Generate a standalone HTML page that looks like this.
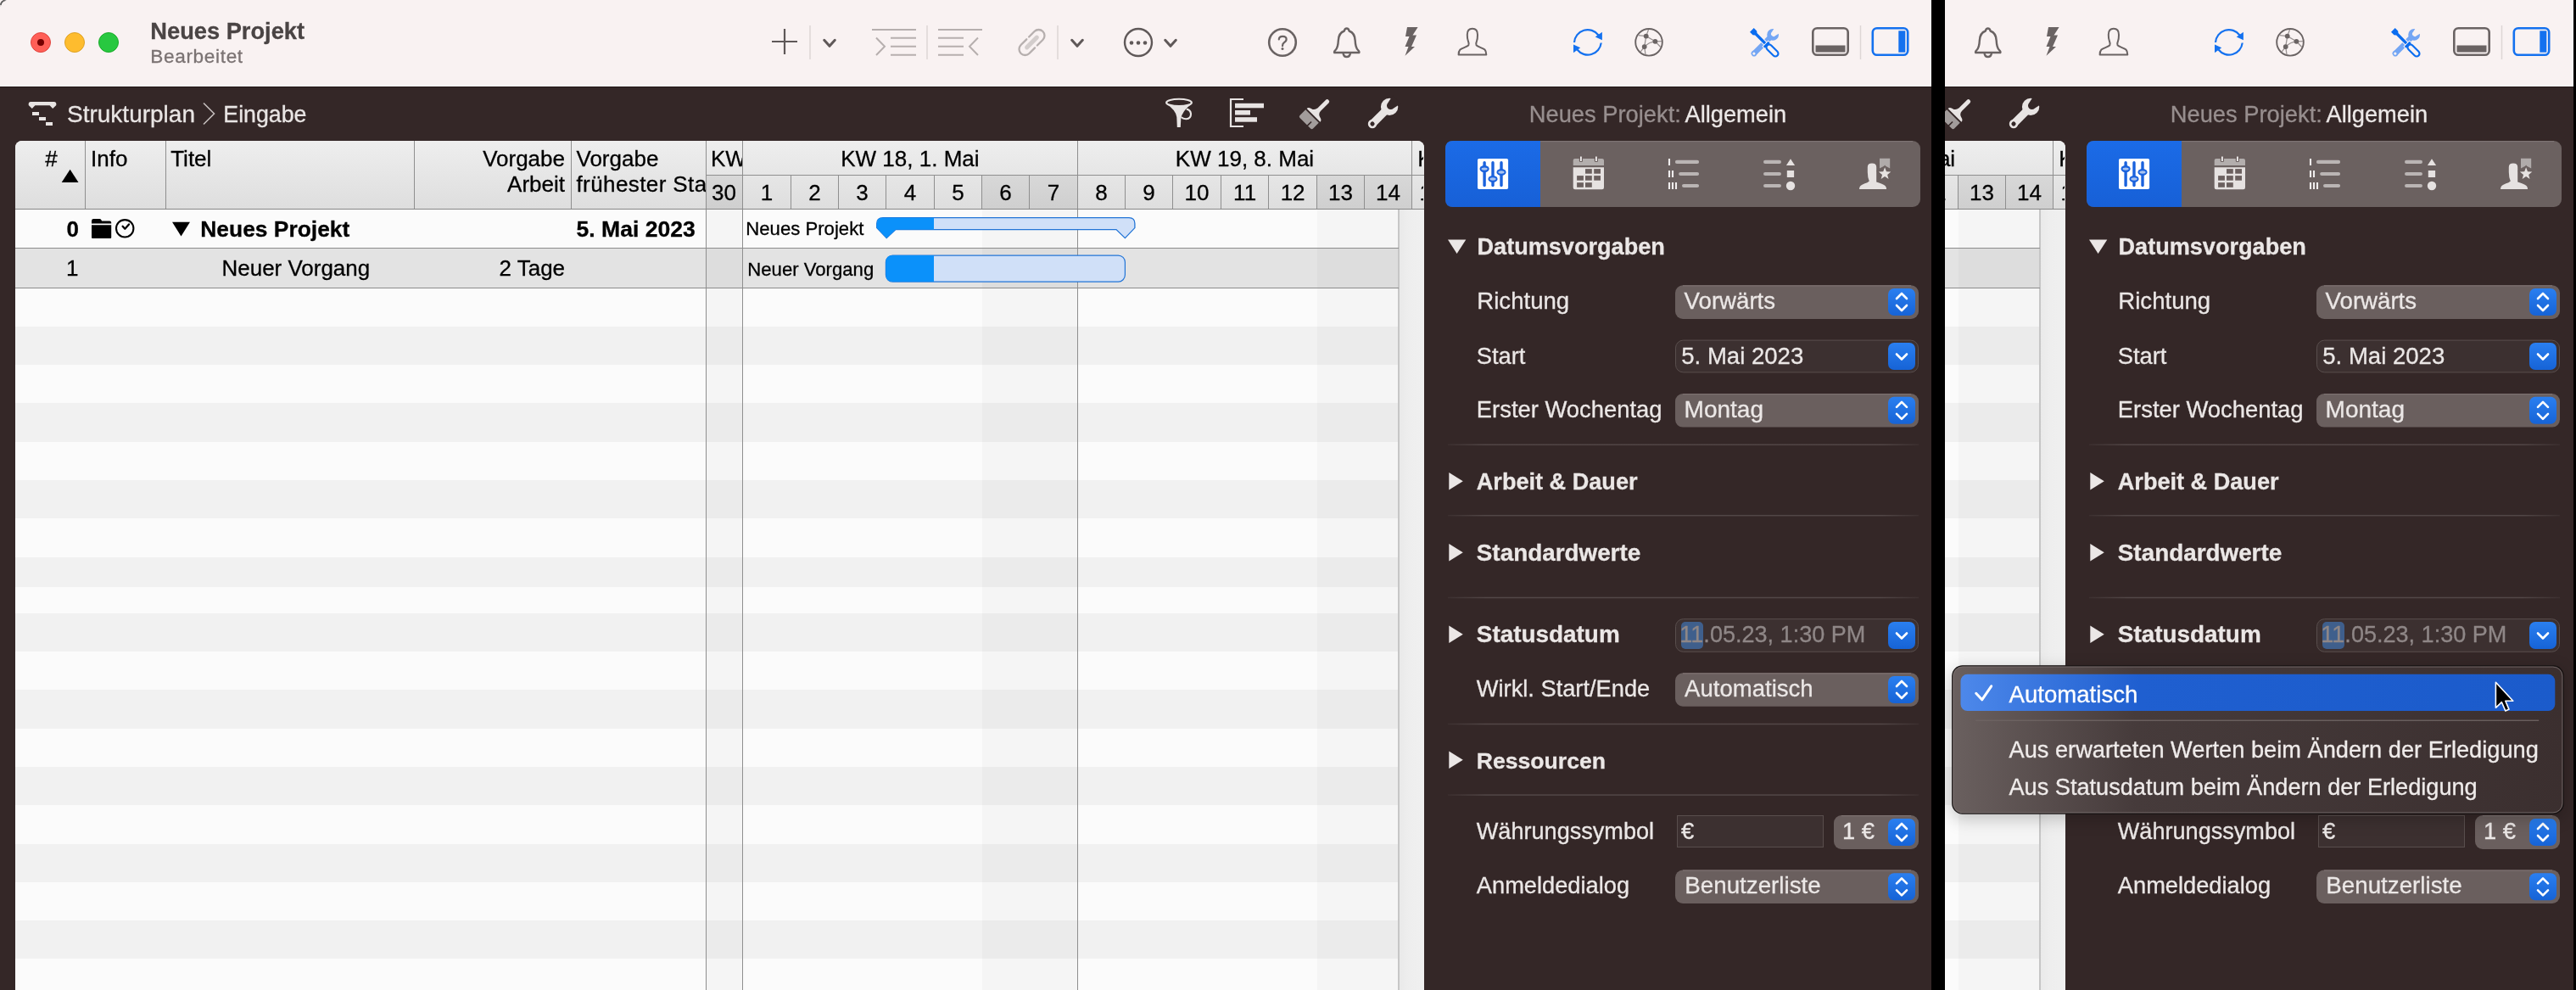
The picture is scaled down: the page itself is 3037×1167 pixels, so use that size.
<!DOCTYPE html>
<html><head><meta charset="utf-8">
<style>
html,body{margin:0;padding:0;}
body{width:3037px;height:1167px;overflow:hidden;background:#000;position:relative;font-family:"Liberation Sans", sans-serif;}
.t{position:absolute;white-space:nowrap;font-family:"Liberation Sans", sans-serif;-webkit-text-stroke:0.3px currentColor;}
.r{position:absolute;}
.s{position:absolute;overflow:visible;}
.clip{position:absolute;top:0;height:1167px;overflow:hidden;}
.win{position:absolute;top:0;left:0;width:2290px;height:1167px;will-change:transform;}
</style></head><body>
<div class="clip" style="left:0;width:2277px"><div class="win">
<div class="r" style="left:0px;top:0px;width:2290px;height:102px;background:#f9f2f2;"></div>
<div class="r" style="left:0px;top:102px;width:2290px;height:1065px;background:#342727;"></div>
<div class="r" style="left:0px;top:101.5px;width:2290px;height:1.5px;background:#1e1616;"></div>
<svg class="s" style="left:30px;top:32px;" width="120" height="36" viewBox="30 32 120 36"><circle cx="48" cy="50" r="11.5" fill="#ff5f57" stroke="#e0443e" stroke-width="1"/><circle cx="88" cy="50" r="11.5" fill="#febc2e" stroke="#dea123" stroke-width="1"/><circle cx="128" cy="50" r="11.5" fill="#28c840" stroke="#1aab29" stroke-width="1"/><circle cx="48" cy="50" r="4" fill="#750000"/></svg>
<svg class="s" style="left:0px;top:0px;" width="12" height="12" viewBox="0 0 12 12"><path d="M0.6 6 Q1.5 1.2 6.5 0.3" stroke="#2a2a2a" stroke-width="1.6" fill="none"/><path d="M0 8 Q0.5 0.5 8 0" stroke="#bbbbbb" stroke-width="0.8" fill="none" opacity="0.6"/></svg>
<div class="t" style="left:177.30px;top:23.00px;font-size:27.25px;line-height:27.25px;font-weight:700;color:#4a4444;">Neues Projekt</div>
<div class="t" style="left:177.30px;top:56.00px;font-size:22.6px;line-height:22.6px;font-weight:400;color:#7b7373;letter-spacing:0.65px;">Bearbeitet</div>
<svg class="s" style="left:880px;top:20px;" width="1400" height="60" viewBox="880 20 1400 60"><path d="M910 49 H940 M925 34 V64" stroke="#5f5858" stroke-width="2.2" fill="none"/><path d="M955 30 V70" stroke="#ddd6d5" stroke-width="1.5"/><path d="M1093 30 V70" stroke="#ddd6d5" stroke-width="1.5"/><path d="M1247 30 V70" stroke="#ddd6d5" stroke-width="1.5"/><path d="M2193.5 30 V70" stroke="#ddd6d5" stroke-width="1.5"/><path d="M971.7 47.3 L978 54.3 L984.3 47.3" stroke="#5f5858" stroke-width="3" fill="none" stroke-linecap="round" stroke-linejoin="round"/><path d="M1263.7 47.3 L1270 54.3 L1276.3 47.3" stroke="#5f5858" stroke-width="3" fill="none" stroke-linecap="round" stroke-linejoin="round"/><path d="M1373.7 47.3 L1380 54.3 L1386.3 47.3" stroke="#5f5858" stroke-width="3" fill="none" stroke-linecap="round" stroke-linejoin="round"/><path d="M1028 35 H1080 M1050 44.8 H1080 M1050 54.8 H1080 M1050 64.8 H1080" stroke="#b6afae" stroke-width="2"/><path d="M1033 44.5 L1043 54.8 L1033 65" stroke="#b6afae" stroke-width="2" fill="none"/><path d="M1106 35 H1158 M1106 44.8 H1136 M1106 54.8 H1136 M1106 64.8 H1136" stroke="#b6afae" stroke-width="2"/><path d="M1153 44.5 L1143 54.8 L1153 65" stroke="#b6afae" stroke-width="2" fill="none"/><g transform="rotate(-45 1216.5 50)"><path d="M2.2 -7 H11.3 A7 7 0 0 1 11.3 7 H2 M-1.8 -7 H-11.3 A7 7 0 0 0 -11.3 7 H-2" transform="translate(1216.5 50)" fill="none" stroke="#b6afae" stroke-width="2.3" stroke-linecap="round"/><path d="M1208.2 50 H1224.8" stroke="#d3cdcc" stroke-width="5" stroke-linecap="round"/></g><circle cx="1342" cy="50" r="16" stroke="#5f5858" stroke-width="2.4" fill="none"/><circle cx="1334" cy="50.5" r="2.3" fill="#5f5858"/><circle cx="1342" cy="50.5" r="2.3" fill="#5f5858"/><circle cx="1350" cy="50.5" r="2.3" fill="#5f5858"/><circle cx="1512" cy="50" r="15.8" stroke="#6a6363" stroke-width="2.6" fill="none"/><path d="M1507.8 46.5 Q1507.8 42.8 1512.2 42.8 Q1516.6 42.8 1516.6 46.3 Q1516.6 48.6 1513.8 50.2 Q1512 51.3 1512 54.2" stroke="#6a6363" stroke-width="2.2" fill="none" stroke-linecap="round"/><circle cx="1512" cy="57.6" r="1.5" fill="#6a6363"/><path d="M1587.7 33.5 Q1590 33.5 1590.6 36.5 Q1597.5 39 1597.7 48 Q1598 56 1601 59 Q1603 61 1602.3 62 H1573.2 Q1572.5 61 1574.5 59 Q1577.5 56 1577.8 48 Q1578 39 1584.8 36.5 Q1585.4 33.5 1587.7 33.5 Z" stroke="#6a6363" stroke-width="2.4" fill="none" stroke-linejoin="round"/><path d="M1583.5 62.5 Q1584 67 1587.7 67 Q1591.5 67 1592 62.5" stroke="#6a6363" stroke-width="2.3" fill="none"/><path d="M1659 32 H1671.6 L1665.5 41.5 H1670 L1664 55 H1668 L1656.5 65.7 L1660.5 55 H1656.5 L1661.5 43 H1657 Z" fill="#6a6363"/><path d="M1735.9 33.8 C1740.2 33.8 1742 36.5 1742 41 C1742 45 1741.6 47 1741 48.5 C1740.3 50 1739.6 51.6 1740.6 53.4 C1742 55.2 1748 56.3 1750.5 58.5 C1752 60 1752.3 62 1752.3 64.6 H1719.6 C1719.6 62 1720 60 1721.4 58.5 C1724 56.3 1730 55.2 1731.3 53.4 C1732.3 51.6 1731.6 50 1730.9 48.5 C1730.3 47 1729.8 45 1729.8 41 C1729.8 36.5 1731.6 33.8 1735.9 33.8 Z" stroke="#6a6363" stroke-width="2" fill="none" stroke-linejoin="round"/><path d="M1856 50 A15.8 15.8 0 0 1 1884.5 41.5" stroke="#1471ef" stroke-width="2.2" fill="none"/><path d="M1887.7 50.5 A15.8 15.8 0 0 1 1859.5 58.5" stroke="#1471ef" stroke-width="2.2" fill="none"/><path d="M1888.9 37.8 L1888.9 47.2 L1880.7 43.6 Z" fill="#1471ef"/><path d="M1855 52.6 L1855 62.2 L1863.2 56.3 Z" fill="#1471ef"/><circle cx="1944" cy="49.8" r="15.8" stroke="#6a6363" stroke-width="1.9" fill="none"/><path d="M1940.7 42.6 L1943.5 35 M1940.7 42.6 L1931.5 41.6 M1940.7 42.6 L1951.4 48.8 M1940.7 42.6 L1938.7 55.1 M1938.7 55.1 Q1944 49.5 1951.4 48.8 M1951.4 48.8 L1959 48.6 M1951.4 48.8 L1957.8 55.5 M1938.7 55.1 L1934.3 60.8 M1938.7 55.1 L1940 64.5" stroke="#9a9393" stroke-width="1.3" fill="none"/><circle cx="1940.7" cy="42.6" r="2.9" fill="#6a6363"/><circle cx="1951.4" cy="48.8" r="2.9" fill="#6a6363"/><circle cx="1938.7" cy="55.1" r="2.9" fill="#6a6363"/><g transform="translate(2080.5 50.5) rotate(45)"><circle cx="0" cy="-13.6" r="6.9" fill="#74a6f4"/><rect x="-3.1" y="-11" width="6.2" height="28.7" fill="#74a6f4"/><circle cx="0" cy="17.7" r="3.4" fill="#74a6f4"/><circle cx="0" cy="17.9" r="1.6" fill="#f9f2f2"/><path d="M-3.1 -15 A3.1 3.1 0 0 0 3.1 -15 L4.6 -22 H-4.6 Z" fill="#f9f2f2"/></g><g transform="translate(2080.5 50.5) rotate(-45) scale(0.93)"><path d="M-3.6 -23 H3.6 V-17.8 L1.8 -15.5 V2 H-1.8 V-15.5 L-3.6 -17.8 Z" fill="#0b6df0" stroke="#f9f2f2" stroke-width="2.4" paint-order="stroke"/><path d="M-4.3 2 H4.3 V5 H-4.3 Z" fill="#0b6df0" stroke="#f9f2f2" stroke-width="2.4" paint-order="stroke"/><path d="M-4.3 2 H4.3 V5 H-4.3 Z" fill="#0b6df0"/><rect x="-3.6" y="4.5" width="7.2" height="18.3" rx="3.6" fill="none" stroke="#0b6df0" stroke-width="2.3"/></g><rect x="2137.3" y="33.3" width="41.4" height="31.4" rx="5" stroke="#6a6363" stroke-width="2.6" fill="none"/><rect x="2140.5" y="53.5" width="35" height="8" fill="#6a6363"/><rect x="2207.8" y="33.3" width="41.4" height="31.4" rx="5" stroke="#1471ef" stroke-width="2.6" fill="none"/><rect x="2238.3" y="36.3" width="8" height="25.4" fill="#1471ef"/></svg>
<svg class="s" style="left:20px;top:110px;" width="1650" height="50" viewBox="20 110 1650 50"><path d="M36.2 120 H63.8 Q66.3 120 66.3 122.6 V124 L62.2 127.9 L58.6 124.3 H41.4 L37.8 127.9 L33.7 124 V122.6 Q33.7 120 36.2 120 Z" fill="#e8e4e3"/><rect x="38" y="132" width="8" height="4" fill="#e8e4e3"/><rect x="46" y="138" width="8" height="4" fill="#e8e4e3"/><rect x="54" y="144" width="8" height="4" fill="#e8e4e3"/><path d="M240 121.5 L252.5 134 L240 146.5" stroke="#c4bdbc" stroke-width="1.6" fill="none"/><ellipse cx="1390" cy="120.9" rx="14.9" ry="4.2" stroke="#e8e4e3" stroke-width="2.1" fill="none"/><path d="M1375.8 123 Q1386 129.5 1387.3 138 L1387.8 150 H1391.8 L1392.3 140 Q1393.5 131 1404.3 123 Q1398 125.4 1390 125.4 Q1381 125.4 1375.8 123 Z" fill="#e8e4e3"/><path d="M1392.8 138.2 Q1394.5 140.3 1398.5 140.2 Q1404.2 139.6 1404 134.2 Q1403.6 129.6 1398.8 128.6" stroke="#e8e4e3" stroke-width="2.1" fill="none"/><path d="M1466 117 H1451 V149 H1466" stroke="#e8e4e3" stroke-width="2.2" fill="none"/><rect x="1456" y="121.8" width="34" height="5.5" fill="#e8e4e3"/><rect x="1456" y="130" width="18" height="5.5" fill="#e8e4e3"/><rect x="1456" y="138.2" width="26" height="5.5" fill="#e8e4e3"/><g transform="translate(1548.55 135.8) rotate(45)"><rect x="-2.5" y="-25.3" width="5" height="17.5" rx="2.5" fill="#e8e4e3"/><path d="M-11.2 0 Q-11.4 -2.6 -7.5 -3.6 Q-2.8 -4.6 -2.5 -9.5 H2.5 Q2.8 -4.6 7.5 -3.6 Q11.4 -2.6 11.2 0 Z" fill="#e8e4e3"/><path d="M-11.2 2.0 H10.8 V11.5 Q10.8 13.6 8.7 13.6 H-9.1 Q-11.2 13.6 -11.2 11.5 Z" fill="#a29c9b"/><path d="M3.7 7.2 V14.5" stroke="#342727" stroke-width="1.6"/></g><g transform="translate(1638.3 125.7) rotate(45)"><circle cx="0" cy="0.3" r="10.2" fill="#e8e4e3"/><rect x="-4.5" y="3" width="9" height="25.7" fill="#e8e4e3"/><circle cx="0" cy="28.7" r="5.2" fill="#e8e4e3"/><circle cx="0" cy="28.7" r="2.6" fill="#342727"/><path d="M-4.6 -1.8 A4.6 4.6 0 0 0 4.6 -1.8 L6.8 -12 H-6.8 Z" fill="#342727"/></g></svg>
<div class="t" style="left:79.00px;top:121.00px;font-size:28.0px;line-height:28.0px;font-weight:400;color:#e9e5e4;">Strukturplan</div>
<div class="t" style="left:263.30px;top:122.00px;font-size:26.75px;line-height:26.75px;font-weight:400;color:#e9e5e4;">Eingabe</div>
<div class="t" style="left:1802.80px;top:121.00px;font-size:27.3px;line-height:27.3px;font-weight:400;color:#978e8e;">Neues Projekt:</div>
<div class="t" style="left:1986.50px;top:121.00px;font-size:27.25px;line-height:27.25px;font-weight:400;color:#ece8e7;">Allgemein</div>
<div class="r" style="left:18px;top:166px;width:1661px;height:1100px;background:#fafafa;border-radius:8px 8px 0 0;overflow:hidden">
<div class="r" style="left:0px;top:0px;width:1661px;height:80px;background:linear-gradient(#eeeeee,#dedede);"></div>
<div class="r" style="left:814.5px;top:40.5px;width:42.89999999999998px;height:39.5px;background:linear-gradient(#d8d8d8,#cfcfcf);"></div>
<div class="r" style="left:1139.5px;top:40.5px;width:113.0px;height:39.5px;background:linear-gradient(#d8d8d8,#cfcfcf);"></div>
<div class="r" style="left:1534.6px;top:40.5px;width:111.90000000000009px;height:39.5px;background:linear-gradient(#d8d8d8,#cfcfcf);"></div>
<div class="r" style="left:0px;top:81px;width:1631px;height:45px;background:#fbfbfb;"></div>
<div class="r" style="left:0px;top:127px;width:1631px;height:46px;background:#e3e3e3;"></div>
<div class="r" style="left:0px;top:174px;width:1631px;height:45px;background:#fbfbfb;"></div>
<div class="r" style="left:0px;top:219px;width:1631px;height:45px;background:#f1f1f1;"></div>
<div class="r" style="left:0px;top:264px;width:1631px;height:45px;background:#fbfbfb;"></div>
<div class="r" style="left:0px;top:309px;width:1631px;height:46px;background:#f1f1f1;"></div>
<div class="r" style="left:0px;top:355px;width:1631px;height:45px;background:#fbfbfb;"></div>
<div class="r" style="left:0px;top:400px;width:1631px;height:45px;background:#f1f1f1;"></div>
<div class="r" style="left:0px;top:445px;width:1631px;height:46px;background:#fbfbfb;"></div>
<div class="r" style="left:0px;top:491px;width:1631px;height:35px;background:#f1f1f1;"></div>
<div class="r" style="left:0px;top:526px;width:1631px;height:31px;background:#fbfbfb;"></div>
<div class="r" style="left:0px;top:557px;width:1631px;height:45px;background:#f1f1f1;"></div>
<div class="r" style="left:0px;top:602px;width:1631px;height:45px;background:#fbfbfb;"></div>
<div class="r" style="left:0px;top:647px;width:1631px;height:46px;background:#f1f1f1;"></div>
<div class="r" style="left:0px;top:693px;width:1631px;height:45px;background:#fbfbfb;"></div>
<div class="r" style="left:0px;top:738px;width:1631px;height:45px;background:#f1f1f1;"></div>
<div class="r" style="left:0px;top:783px;width:1631px;height:46px;background:#fbfbfb;"></div>
<div class="r" style="left:0px;top:829px;width:1631px;height:45px;background:#f1f1f1;"></div>
<div class="r" style="left:0px;top:874px;width:1631px;height:45px;background:#fbfbfb;"></div>
<div class="r" style="left:0px;top:919px;width:1631px;height:45px;background:#f1f1f1;"></div>
<div class="r" style="left:0px;top:964px;width:1631px;height:45px;background:#fbfbfb;"></div>
<div class="r" style="left:0px;top:1009px;width:1631px;height:45px;background:#f1f1f1;"></div>
<div class="r" style="left:815px;top:81px;width:42px;height:1053px;background:rgba(0,0,0,0.022);"></div>
<div class="r" style="left:1140px;top:81px;width:112px;height:1053px;background:rgba(0,0,0,0.022);"></div>
<div class="r" style="left:1535px;top:81px;width:96px;height:1053px;background:rgba(0,0,0,0.022);"></div>
<div class="r" style="left:1631px;top:81px;width:30px;height:1053px;background:linear-gradient(90deg,#e9e9e9,#eeeeee 40%,#f0f0f0);"></div>
<div class="r" style="left:81.5px;top:0px;width:1.0px;height:80px;background:#8f8f8f;"></div>
<div class="r" style="left:176.9px;top:0px;width:1.0px;height:80px;background:#8f8f8f;"></div>
<div class="r" style="left:469.9px;top:0px;width:1.0px;height:80px;background:#8f8f8f;"></div>
<div class="r" style="left:655.1px;top:0px;width:1.0px;height:80px;background:#8f8f8f;"></div>
<div class="r" style="left:814.0px;top:0px;width:1.0px;height:80px;background:#8f8f8f;"></div>
<div class="r" style="left:856.9px;top:0px;width:1.0px;height:80px;background:#8f8f8f;"></div>
<div class="r" style="left:1252.0px;top:0px;width:1.0px;height:80px;background:#8f8f8f;"></div>
<div class="r" style="left:1646.0px;top:0px;width:1.0px;height:80px;background:#8f8f8f;"></div>
<div class="r" style="left:814.5px;top:40px;width:846.5px;height:1px;background:#8f8f8f;"></div>
<div class="r" style="left:914.1px;top:41px;width:1.0px;height:39px;background:#8f8f8f;"></div>
<div class="r" style="left:969.9px;top:41px;width:1.0px;height:39px;background:#8f8f8f;"></div>
<div class="r" style="left:1026.0px;top:41px;width:1.0px;height:39px;background:#8f8f8f;"></div>
<div class="r" style="left:1082.8px;top:41px;width:1.0px;height:39px;background:#8f8f8f;"></div>
<div class="r" style="left:1139.0px;top:41px;width:1.0px;height:39px;background:#8f8f8f;"></div>
<div class="r" style="left:1195.0px;top:41px;width:1.0px;height:39px;background:#8f8f8f;"></div>
<div class="r" style="left:1307.9px;top:41px;width:1.0px;height:39px;background:#8f8f8f;"></div>
<div class="r" style="left:1363.9px;top:41px;width:1.0px;height:39px;background:#8f8f8f;"></div>
<div class="r" style="left:1421.1px;top:41px;width:1.0px;height:39px;background:#8f8f8f;"></div>
<div class="r" style="left:1477.1px;top:41px;width:1.0px;height:39px;background:#8f8f8f;"></div>
<div class="r" style="left:1534.1px;top:41px;width:1.0px;height:39px;background:#8f8f8f;"></div>
<div class="r" style="left:1590.0px;top:41px;width:1.0px;height:39px;background:#8f8f8f;"></div>
<div class="r" style="left:0px;top:80px;width:1661px;height:1px;background:#878787;"></div>
<div class="r" style="left:814.0px;top:81px;width:1.0px;height:1053px;background:#8f8f8f;"></div>
<div class="r" style="left:856.9px;top:81px;width:1.0px;height:1053px;background:#8f8f8f;"></div>
<div class="r" style="left:1252.0px;top:81px;width:1.0px;height:1053px;background:#8f8f8f;"></div>
<div class="r" style="left:1630px;top:81px;width:1.5px;height:1053px;background:#c6c6c6;"></div>
<div class="r" style="left:0px;top:126px;width:1631px;height:1px;background:#8c8c8c;"></div>
<div class="r" style="left:0px;top:173px;width:1631px;height:1px;background:#8c8c8c;"></div>
</div>
<div class="t" style="left:-2932.40px;width:3000px;text-align:right;top:174.00px;font-size:26.0px;line-height:26.0px;font-weight:400;color:#000;">#</div>
<div class="t" style="left:107.10px;top:174.00px;font-size:26.0px;line-height:26.0px;font-weight:400;color:#000;">Info</div>
<div class="t" style="left:201.20px;top:174.00px;font-size:26.0px;line-height:26.0px;font-weight:400;color:#000;">Titel</div>
<div class="t" style="left:-2334.00px;width:3000px;text-align:right;top:174.00px;font-size:26.0px;line-height:26.0px;font-weight:400;color:#000;">Vorgabe</div>
<div class="t" style="left:-2334.00px;width:3000px;text-align:right;top:204.00px;font-size:26.0px;line-height:26.0px;font-weight:400;color:#000;">Arbeit</div>
<div class="r" style="left:675px;top:170px;width:157px;height:70px;overflow:hidden"><div class="t" style="left:4.50px;top:4.00px;font-size:26.0px;line-height:26.0px;font-weight:400;color:#000;">Vorgabe</div><div class="t" style="left:4.50px;top:34.00px;font-size:26.0px;line-height:26.0px;font-weight:400;color:#000;letter-spacing:0.4px;">frühester Sta</div></div>
<div class="r" style="left:834px;top:170px;width:41px;height:35px;overflow:hidden"><div class="t" style="left:3.90px;top:4.00px;font-size:26.0px;line-height:26.0px;font-weight:400;color:#000;">KW 17</div></div>
<div class="t" style="left:-427.10px;width:3000px;text-align:center;top:174.00px;font-size:26.0px;line-height:26.0px;font-weight:400;color:#000;">KW 18, 1. Mai</div>
<div class="t" style="left:-32.50px;width:3000px;text-align:center;top:174.00px;font-size:26.0px;line-height:26.0px;font-weight:400;color:#000;">KW 19, 8. Mai</div>
<div class="r" style="left:1666px;top:170px;width:12px;height:35px;overflow:hidden"><div class="t" style="left:5.30px;top:4.00px;font-size:26.0px;line-height:26.0px;font-weight:400;color:#000;">KW 20</div></div>
<div class="t" style="left:-646.50px;width:3000px;text-align:center;top:214.00px;font-size:26.0px;line-height:26.0px;font-weight:400;color:#000;">30</div>
<div class="t" style="left:-596.00px;width:3000px;text-align:center;top:214.00px;font-size:26.0px;line-height:26.0px;font-weight:400;color:#000;">1</div>
<div class="t" style="left:-539.50px;width:3000px;text-align:center;top:214.00px;font-size:26.0px;line-height:26.0px;font-weight:400;color:#000;">2</div>
<div class="t" style="left:-483.55px;width:3000px;text-align:center;top:214.00px;font-size:26.0px;line-height:26.0px;font-weight:400;color:#000;">3</div>
<div class="t" style="left:-427.10px;width:3000px;text-align:center;top:214.00px;font-size:26.0px;line-height:26.0px;font-weight:400;color:#000;">4</div>
<div class="t" style="left:-370.60px;width:3000px;text-align:center;top:214.00px;font-size:26.0px;line-height:26.0px;font-weight:400;color:#000;">5</div>
<div class="t" style="left:-314.50px;width:3000px;text-align:center;top:214.00px;font-size:26.0px;line-height:26.0px;font-weight:400;color:#000;">6</div>
<div class="t" style="left:-258.00px;width:3000px;text-align:center;top:214.00px;font-size:26.0px;line-height:26.0px;font-weight:400;color:#000;">7</div>
<div class="t" style="left:-201.55px;width:3000px;text-align:center;top:214.00px;font-size:26.0px;line-height:26.0px;font-weight:400;color:#000;">8</div>
<div class="t" style="left:-145.60px;width:3000px;text-align:center;top:214.00px;font-size:26.0px;line-height:26.0px;font-weight:400;color:#000;">9</div>
<div class="t" style="left:-89.00px;width:3000px;text-align:center;top:214.00px;font-size:26.0px;line-height:26.0px;font-weight:400;color:#000;">10</div>
<div class="t" style="left:-32.40px;width:3000px;text-align:center;top:214.00px;font-size:26.0px;line-height:26.0px;font-weight:400;color:#000;">11</div>
<div class="t" style="left:24.10px;width:3000px;text-align:center;top:214.00px;font-size:26.0px;line-height:26.0px;font-weight:400;color:#000;">12</div>
<div class="t" style="left:80.55px;width:3000px;text-align:center;top:214.00px;font-size:26.0px;line-height:26.0px;font-weight:400;color:#000;">13</div>
<div class="t" style="left:136.50px;width:3000px;text-align:center;top:214.00px;font-size:26.0px;line-height:26.0px;font-weight:400;color:#000;">14</div>
<div class="r" style="left:1665px;top:208px;width:13px;height:37px;overflow:hidden"><div class="t" style="left:-1477.00px;width:3000px;text-align:center;top:6.00px;font-size:26.0px;line-height:26.0px;font-weight:400;color:#000;">15</div></div>
<svg class="s" style="left:60px;top:190px;" width="180" height="100" viewBox="60 190 180 100"><path d="M72.7 215 L82.6 199.7 L92.5 215 Z" fill="#000"/><path d="M203 261.7 H224 L213.5 278.6 Z" fill="#000"/><path d="M108 260.4 Q108 258.1 110.3 258.1 H117.3 Q118.7 258.1 119.4 259.3 L120.1 260.5 H129.3 Q131.2 260.5 131.2 262.2 V263.4 H108 Z" fill="#000"/><path d="M108 265.3 H131.2 V280 Q131.2 281 130.2 281 H109 Q108 281 108 280 Z" fill="#000"/><circle cx="147.2" cy="269.3" r="10.2" stroke="#000" stroke-width="2.1" fill="none"/><path d="M144.6 266.8 L147.3 269.7 L152 264.4" stroke="#000" stroke-width="2.3" fill="none" stroke-linecap="round" stroke-linejoin="round"/></svg>
<div class="t" style="left:-2907.00px;width:3000px;text-align:right;top:257.00px;font-size:26px;line-height:26px;font-weight:700;color:#000;">0</div>
<div class="t" style="left:236.30px;top:257.00px;font-size:26.4px;line-height:26.4px;font-weight:700;color:#000;">Neues Projekt</div>
<div class="t" style="left:679.50px;top:257.00px;font-size:26.55px;line-height:26.55px;font-weight:700;color:#000;">5. Mai 2023</div>
<div class="t" style="left:-2907.50px;width:3000px;text-align:right;top:303.00px;font-size:26.0px;line-height:26.0px;font-weight:400;color:#000;">1</div>
<div class="t" style="left:261.60px;top:304.00px;font-size:25.95px;line-height:25.95px;font-weight:400;color:#000;">Neuer Vorgang</div>
<div class="t" style="left:-2334.00px;width:3000px;text-align:right;top:304.00px;font-size:25.95px;line-height:25.95px;font-weight:400;color:#000;">2 Tage</div>
<div class="t" style="left:879.30px;top:259.00px;font-size:22.15px;line-height:22.15px;font-weight:400;color:#000;">Neues Projekt</div>
<div class="t" style="left:881.30px;top:307.00px;font-size:22.15px;line-height:22.15px;font-weight:400;color:#000;">Neuer Vorgang</div>
<svg class="s" style="left:1020px;top:245px;" width="330" height="100" viewBox="1020 245 330 100"><g transform="translate(0 0.6)"><defs><clipPath id="sb"><path d="M1041 256 H1331 Q1337.9 256 1337.9 263 V268 L1326.4 280 L1316 270 H1056 L1045.2 280 L1033.7 268 V263 Q1033.7 256 1041 256 Z"/></clipPath></defs><path d="M1041 256 H1331 Q1337.9 256 1337.9 263 V268 L1326.4 280 L1316 270 H1056 L1045.2 280 L1033.7 268 V263 Q1033.7 256 1041 256 Z" fill="#d0e0f8" stroke="#2274d6" stroke-width="1.3"/><rect x="1030" y="250" width="71" height="40" fill="#0b91fa" clip-path="url(#sb)"/><rect x="1044.4" y="300.5" width="282" height="31" rx="8" fill="#d0e0f8" stroke="#2274d6" stroke-width="1.2"/><path d="M1052.4 300.5 H1101 V331.5 H1052.4 Q1044.4 331.5 1044.4 323.5 V308.5 Q1044.4 300.5 1052.4 300.5 Z" fill="#0b91fa"/></g></svg>
<svg class="s" style="left:1690px;top:160px;" width="590" height="1007" viewBox="1690 160 590 1007"><rect x="1704" y="166" width="560" height="78" rx="9" fill="#6b6160"/><path d="M1816 166.6 H2255" stroke="#7d7473" stroke-width="1.2"/><defs><linearGradient id="bg1" x1="0" y1="0" x2="0" y2="1"><stop offset="0" stop-color="#1b6be7"/><stop offset="1" stop-color="#1760d7"/></linearGradient></defs><path d="M1713 166 H1816 V244 H1713 Q1704 244 1704 235 V175 Q1704 166 1713 166 Z" fill="url(#bg1)"/><rect x="1742" y="187" width="36.1" height="36.1" rx="1.8" fill="#fff"/><path d="M1750.1 191.8 V218.5" stroke="#1a62dd" stroke-width="3.4" stroke-linecap="round"/><ellipse cx="1750.1" cy="199.1" rx="5.6" ry="4" fill="#1a62dd"/><ellipse cx="1750.1" cy="199.1" rx="3.6" ry="1.7" fill="#a9c3ef"/><path d="M1760 191.8 V218.5" stroke="#1a62dd" stroke-width="3.4" stroke-linecap="round"/><ellipse cx="1760" cy="211" rx="5.6" ry="4" fill="#1a62dd"/><ellipse cx="1760" cy="211" rx="3.6" ry="1.7" fill="#a9c3ef"/><path d="M1770 191.8 V218.5" stroke="#1a62dd" stroke-width="3.4" stroke-linecap="round"/><ellipse cx="1770" cy="203" rx="5.6" ry="4" fill="#1a62dd"/><ellipse cx="1770" cy="203" rx="3.6" ry="1.7" fill="#a9c3ef"/><path d="M1857 186.9 H1888.8 Q1891 186.9 1891 189.1 V194.9 H1854.7 V189.1 Q1854.7 186.9 1857 186.9 Z" fill="#b3aead"/><path d="M1854.7 197.2 H1891 V221 Q1891 223.2 1888.8 223.2 H1856.9 Q1854.7 223.2 1854.7 221 Z" fill="#e6e2e1"/><rect x="1862.4" y="184" width="3" height="6.5" rx="0.8" fill="#f4f2f2" stroke="#6b605f" stroke-width="1.2"/><rect x="1880.4" y="184" width="3" height="6.5" rx="0.8" fill="#f4f2f2" stroke="#6b605f" stroke-width="1.2"/><rect x="1869" y="199.1" width="7.8" height="5.6" fill="#6b605f"/><rect x="1879.2" y="199.1" width="7.8" height="5.6" fill="#6b605f"/><rect x="1859.1" y="207.1" width="7.8" height="5.6" fill="#6b605f"/><rect x="1869" y="207.1" width="7.8" height="5.6" fill="#6b605f"/><rect x="1879.2" y="207.1" width="7.8" height="5.6" fill="#6b605f"/><rect x="1859.1" y="215.2" width="7.8" height="5.6" fill="#6b605f"/><rect x="1869" y="215.2" width="7.8" height="5.6" fill="#6b605f"/><path d="M1968 187 V195 M1968 201 V209 M1972 201 V209 M1968 215 V223.1 M1972 215 V223.1 M1976 215 V223.1" stroke="#f0eded" stroke-width="2.1"/><path d="M1977 190.9 H2001 M1981.2 205 H2001 M1985.1 219 H2001" stroke="#bab5b4" stroke-width="4.2" stroke-linecap="round"/><path d="M2081.1 190.9 H2097.9 M2081.1 205 H2097.9 M2081.1 219 H2097.9" stroke="#bab5b4" stroke-width="4.2" stroke-linecap="round"/><path d="M2111 187.2 L2116.1 195 H2105.9 Z" fill="#e6e2e1"/><rect x="2106.8" y="201" width="8.3" height="8" fill="#e6e2e1"/><circle cx="2111" cy="219" r="5.2" fill="#e6e2e1"/><path d="M2216 186.8 H2228.2 V198.6 L2222.1 195.3 L2216 198.6 Z" fill="#b0abaa"/><path d="M2207 192.6 Q2212.2 192.6 2212.2 197 V214.5 Q2214 215.2 2218 216.5 Q2224.1 218.5 2224.1 222.9 H2192 Q2192 218.5 2198 216.5 Q2202 215.3 2203.8 213.5 Q2201.8 209 2201.8 203 V197 Q2201.8 192.6 2207 192.6 Z" fill="#e6e2e1"/><path d="M2222.10 197.30 L2223.98 202.31 L2229.33 202.55 L2225.14 205.89 L2226.57 211.05 L2222.10 208.10 L2217.63 211.05 L2219.06 205.89 L2214.87 202.55 L2220.22 202.31 Z" fill="#e6e2e1" stroke="#6b605f" stroke-width="2.2" paint-order="stroke"/><path d="M1707 282.5 H1728.3 L1717.6 299 Z" fill="#ebe7e6"/><path d="M1708.3 557 L1724.8 567.3 L1708.3 577.6 Z" fill="#ebe7e6"/><path d="M1708.3 641 L1724.8 651.3 L1708.3 661.6 Z" fill="#ebe7e6"/><path d="M1708.3 737.5 L1724.8 747.8 L1708.3 758.1 Z" fill="#ebe7e6"/><path d="M1708.3 885.5 L1724.8 895.8 L1708.3 906.1 Z" fill="#ebe7e6"/><rect x="1707" y="523.45" width="555" height="1.5" fill="url(#sepg)"/><rect x="1707" y="606.95" width="555" height="1.5" fill="url(#sepg)"/><rect x="1707" y="703.75" width="555" height="1.5" fill="url(#sepg)"/><rect x="1707" y="852.75" width="555" height="1.5" fill="url(#sepg)"/><rect x="1707" y="936.35" width="555" height="1.5" fill="url(#sepg)"/><defs><linearGradient id="sepg" x1="0" y1="0" x2="1" y2="0"><stop offset="0" stop-color="#3c3030"/><stop offset="0.08" stop-color="#524747"/><stop offset="0.92" stop-color="#524747"/><stop offset="1" stop-color="#3c3030"/></linearGradient></defs><defs><linearGradient id="bg2" x1="0" y1="0" x2="0" y2="1"><stop offset="0" stop-color="#2a7ff0"/><stop offset="1" stop-color="#1663d6"/></linearGradient></defs><rect x="1975" y="336.3" width="287" height="39.69999999999999" rx="9" fill="#6a5f5e"/><path d="M1984 336.90000000000003 H2253" stroke="#7c7170" stroke-width="1.2"/><rect x="2226" y="340" width="32" height="32" rx="7" fill="url(#bg2)"/><path d="M2236 352.0 L2242 346.0 L2248 352.0 M2236 360.0 L2242 366.0 L2248 360.0" stroke="#fff" stroke-width="2.6" fill="none" stroke-linecap="round" stroke-linejoin="round"/><rect x="1975.5" y="401.1" width="286" height="37.799999999999955" rx="9" fill="#3c3030" stroke="#594e4d" stroke-width="1"/><rect x="2226" y="404" width="32" height="32" rx="7" fill="url(#bg2)"/><path d="M2236 417.5 L2242 423.5 L2248 417.5" stroke="#fff" stroke-width="2.6" fill="none" stroke-linecap="round" stroke-linejoin="round"/><rect x="1975" y="464" width="287" height="39.60000000000002" rx="9" fill="#6a5f5e"/><path d="M1984 464.6 H2253" stroke="#7c7170" stroke-width="1.2"/><rect x="2226" y="467.8" width="32" height="32.0" rx="7" fill="url(#bg2)"/><path d="M2236 479.8 L2242 473.8 L2248 479.8 M2236 487.8 L2242 493.8 L2248 487.8" stroke="#fff" stroke-width="2.6" fill="none" stroke-linecap="round" stroke-linejoin="round"/><rect x="1975.5" y="729.7" width="286" height="38.59999999999991" rx="9" fill="#3c3030" stroke="#594e4d" stroke-width="1"/><rect x="2226" y="733" width="32" height="32" rx="7" fill="url(#bg2)"/><path d="M2236 746.5 L2242 752.5 L2248 746.5" stroke="#fff" stroke-width="2.6" fill="none" stroke-linecap="round" stroke-linejoin="round"/><rect x="1982" y="733" width="26" height="32" rx="5" fill="#3f5f8c"/><rect x="1975" y="793.3" width="287" height="39.40000000000009" rx="9" fill="#6a5f5e"/><path d="M1984 793.9 H2253" stroke="#7c7170" stroke-width="1.2"/><rect x="2226" y="797" width="32" height="32" rx="7" fill="url(#bg2)"/><path d="M2236 809.0 L2242 803.0 L2248 809.0 M2236 817.0 L2242 823.0 L2248 817.0" stroke="#fff" stroke-width="2.6" fill="none" stroke-linecap="round" stroke-linejoin="round"/><rect x="1977.5" y="961.5" width="172" height="37" rx="0" fill="#3c3030" stroke="#594e4d" stroke-width="1"/><rect x="2162" y="961" width="100" height="40" rx="9" fill="#6a5f5e"/><path d="M2171 961.6 H2253" stroke="#7c7170" stroke-width="1.2"/><rect x="2226" y="965" width="32" height="32" rx="7" fill="url(#bg2)"/><path d="M2236 977.0 L2242 971.0 L2248 977.0 M2236 985.0 L2242 991.0 L2248 985.0" stroke="#fff" stroke-width="2.6" fill="none" stroke-linecap="round" stroke-linejoin="round"/><rect x="1975" y="1025.5" width="287" height="39.5" rx="9" fill="#6a5f5e"/><path d="M1984 1026.1 H2253" stroke="#7c7170" stroke-width="1.2"/><rect x="2226" y="1029.3" width="32" height="32.0" rx="7" fill="url(#bg2)"/><path d="M2236 1041.3 L2242 1035.3 L2248 1041.3 M2236 1049.3 L2242 1055.3 L2248 1049.3" stroke="#fff" stroke-width="2.6" fill="none" stroke-linecap="round" stroke-linejoin="round"/></svg>
<div class="t" style="left:1741.50px;top:277.00px;font-size:27.1px;line-height:27.1px;font-weight:700;color:#ebe7e6;">Datumsvorgaben</div>
<div class="t" style="left:1741.30px;top:341.00px;font-size:27.6px;line-height:27.6px;font-weight:400;color:#ebe7e6;">Richtung</div>
<div class="t" style="left:1985.60px;top:341.00px;font-size:27.65px;line-height:27.65px;font-weight:400;color:#ebe7e6;">Vorwärts</div>
<div class="t" style="left:1740.80px;top:406.00px;font-size:27.3px;line-height:27.3px;font-weight:400;color:#ebe7e6;">Start</div>
<div class="t" style="left:1982.30px;top:406.00px;font-size:27.55px;line-height:27.55px;font-weight:400;color:#ebe7e6;">5. Mai 2023</div>
<div class="t" style="left:1740.80px;top:469.00px;font-size:27.4px;line-height:27.4px;font-weight:400;color:#ebe7e6;">Erster Wochentag</div>
<div class="t" style="left:1985.60px;top:469.00px;font-size:28.0px;line-height:28.0px;font-weight:400;color:#ebe7e6;">Montag</div>
<div class="t" style="left:1740.80px;top:554.00px;font-size:27.1px;line-height:27.1px;font-weight:700;color:#ebe7e6;">Arbeit &amp; Dauer</div>
<div class="t" style="left:1740.80px;top:638.00px;font-size:27.85px;line-height:27.85px;font-weight:700;color:#ebe7e6;">Standardwerte</div>
<div class="t" style="left:1740.80px;top:734.00px;font-size:27.9px;line-height:27.9px;font-weight:700;color:#ebe7e6;">Statusdatum</div>
<div class="t" style="left:1980.30px;top:735.00px;font-size:27.05px;line-height:27.05px;font-weight:400;color:#8f8787;">11.05.23, 1:30 PM</div>
<div class="t" style="left:1740.80px;top:798.00px;font-size:27.25px;line-height:27.25px;font-weight:400;color:#ebe7e6;">Wirkl. Start/Ende</div>
<div class="t" style="left:1986.10px;top:798.00px;font-size:27.55px;line-height:27.55px;font-weight:400;color:#ebe7e6;">Automatisch</div>
<div class="t" style="left:1740.80px;top:884.00px;font-size:26.6px;line-height:26.6px;font-weight:700;color:#ebe7e6;">Ressourcen</div>
<div class="t" style="left:1740.80px;top:966.00px;font-size:27.1px;line-height:27.1px;font-weight:400;color:#ebe7e6;">Währungssymbol</div>
<div class="t" style="left:1981.90px;top:966.00px;font-size:27.3px;line-height:27.3px;font-weight:400;color:#ebe7e6;">€</div>
<div class="t" style="left:2172.10px;top:966.00px;font-size:27.3px;line-height:27.3px;font-weight:400;color:#ebe7e6;">1 €</div>
<div class="t" style="left:1740.80px;top:1030.00px;font-size:27.25px;line-height:27.25px;font-weight:400;color:#ebe7e6;">Anmeldedialog</div>
<div class="t" style="left:1986.30px;top:1030.00px;font-size:27.75px;line-height:27.75px;font-weight:400;color:#ebe7e6;">Benutzerliste</div>
</div></div>
<div class="clip" style="left:2293px;width:741px"><div class="win" style="left:-1537px">
<div class="r" style="left:0px;top:0px;width:2290px;height:102px;background:#f9f2f2;"></div>
<div class="r" style="left:0px;top:102px;width:2290px;height:1065px;background:#342727;"></div>
<div class="r" style="left:0px;top:101.5px;width:2290px;height:1.5px;background:#1e1616;"></div>
<svg class="s" style="left:30px;top:32px;" width="120" height="36" viewBox="30 32 120 36"><circle cx="48" cy="50" r="11.5" fill="#ff5f57" stroke="#e0443e" stroke-width="1"/><circle cx="88" cy="50" r="11.5" fill="#febc2e" stroke="#dea123" stroke-width="1"/><circle cx="128" cy="50" r="11.5" fill="#28c840" stroke="#1aab29" stroke-width="1"/><circle cx="48" cy="50" r="4" fill="#750000"/></svg>
<svg class="s" style="left:0px;top:0px;" width="12" height="12" viewBox="0 0 12 12"><path d="M0.6 6 Q1.5 1.2 6.5 0.3" stroke="#2a2a2a" stroke-width="1.6" fill="none"/><path d="M0 8 Q0.5 0.5 8 0" stroke="#bbbbbb" stroke-width="0.8" fill="none" opacity="0.6"/></svg>
<div class="t" style="left:177.30px;top:23.00px;font-size:27.25px;line-height:27.25px;font-weight:700;color:#4a4444;">Neues Projekt</div>
<div class="t" style="left:177.30px;top:56.00px;font-size:22.6px;line-height:22.6px;font-weight:400;color:#7b7373;letter-spacing:0.65px;">Bearbeitet</div>
<svg class="s" style="left:880px;top:20px;" width="1400" height="60" viewBox="880 20 1400 60"><path d="M910 49 H940 M925 34 V64" stroke="#5f5858" stroke-width="2.2" fill="none"/><path d="M955 30 V70" stroke="#ddd6d5" stroke-width="1.5"/><path d="M1093 30 V70" stroke="#ddd6d5" stroke-width="1.5"/><path d="M1247 30 V70" stroke="#ddd6d5" stroke-width="1.5"/><path d="M2193.5 30 V70" stroke="#ddd6d5" stroke-width="1.5"/><path d="M971.7 47.3 L978 54.3 L984.3 47.3" stroke="#5f5858" stroke-width="3" fill="none" stroke-linecap="round" stroke-linejoin="round"/><path d="M1263.7 47.3 L1270 54.3 L1276.3 47.3" stroke="#5f5858" stroke-width="3" fill="none" stroke-linecap="round" stroke-linejoin="round"/><path d="M1373.7 47.3 L1380 54.3 L1386.3 47.3" stroke="#5f5858" stroke-width="3" fill="none" stroke-linecap="round" stroke-linejoin="round"/><path d="M1028 35 H1080 M1050 44.8 H1080 M1050 54.8 H1080 M1050 64.8 H1080" stroke="#b6afae" stroke-width="2"/><path d="M1033 44.5 L1043 54.8 L1033 65" stroke="#b6afae" stroke-width="2" fill="none"/><path d="M1106 35 H1158 M1106 44.8 H1136 M1106 54.8 H1136 M1106 64.8 H1136" stroke="#b6afae" stroke-width="2"/><path d="M1153 44.5 L1143 54.8 L1153 65" stroke="#b6afae" stroke-width="2" fill="none"/><g transform="rotate(-45 1216.5 50)"><path d="M2.2 -7 H11.3 A7 7 0 0 1 11.3 7 H2 M-1.8 -7 H-11.3 A7 7 0 0 0 -11.3 7 H-2" transform="translate(1216.5 50)" fill="none" stroke="#b6afae" stroke-width="2.3" stroke-linecap="round"/><path d="M1208.2 50 H1224.8" stroke="#d3cdcc" stroke-width="5" stroke-linecap="round"/></g><circle cx="1342" cy="50" r="16" stroke="#5f5858" stroke-width="2.4" fill="none"/><circle cx="1334" cy="50.5" r="2.3" fill="#5f5858"/><circle cx="1342" cy="50.5" r="2.3" fill="#5f5858"/><circle cx="1350" cy="50.5" r="2.3" fill="#5f5858"/><circle cx="1512" cy="50" r="15.8" stroke="#6a6363" stroke-width="2.6" fill="none"/><path d="M1507.8 46.5 Q1507.8 42.8 1512.2 42.8 Q1516.6 42.8 1516.6 46.3 Q1516.6 48.6 1513.8 50.2 Q1512 51.3 1512 54.2" stroke="#6a6363" stroke-width="2.2" fill="none" stroke-linecap="round"/><circle cx="1512" cy="57.6" r="1.5" fill="#6a6363"/><path d="M1587.7 33.5 Q1590 33.5 1590.6 36.5 Q1597.5 39 1597.7 48 Q1598 56 1601 59 Q1603 61 1602.3 62 H1573.2 Q1572.5 61 1574.5 59 Q1577.5 56 1577.8 48 Q1578 39 1584.8 36.5 Q1585.4 33.5 1587.7 33.5 Z" stroke="#6a6363" stroke-width="2.4" fill="none" stroke-linejoin="round"/><path d="M1583.5 62.5 Q1584 67 1587.7 67 Q1591.5 67 1592 62.5" stroke="#6a6363" stroke-width="2.3" fill="none"/><path d="M1659 32 H1671.6 L1665.5 41.5 H1670 L1664 55 H1668 L1656.5 65.7 L1660.5 55 H1656.5 L1661.5 43 H1657 Z" fill="#6a6363"/><path d="M1735.9 33.8 C1740.2 33.8 1742 36.5 1742 41 C1742 45 1741.6 47 1741 48.5 C1740.3 50 1739.6 51.6 1740.6 53.4 C1742 55.2 1748 56.3 1750.5 58.5 C1752 60 1752.3 62 1752.3 64.6 H1719.6 C1719.6 62 1720 60 1721.4 58.5 C1724 56.3 1730 55.2 1731.3 53.4 C1732.3 51.6 1731.6 50 1730.9 48.5 C1730.3 47 1729.8 45 1729.8 41 C1729.8 36.5 1731.6 33.8 1735.9 33.8 Z" stroke="#6a6363" stroke-width="2" fill="none" stroke-linejoin="round"/><path d="M1856 50 A15.8 15.8 0 0 1 1884.5 41.5" stroke="#1471ef" stroke-width="2.2" fill="none"/><path d="M1887.7 50.5 A15.8 15.8 0 0 1 1859.5 58.5" stroke="#1471ef" stroke-width="2.2" fill="none"/><path d="M1888.9 37.8 L1888.9 47.2 L1880.7 43.6 Z" fill="#1471ef"/><path d="M1855 52.6 L1855 62.2 L1863.2 56.3 Z" fill="#1471ef"/><circle cx="1944" cy="49.8" r="15.8" stroke="#6a6363" stroke-width="1.9" fill="none"/><path d="M1940.7 42.6 L1943.5 35 M1940.7 42.6 L1931.5 41.6 M1940.7 42.6 L1951.4 48.8 M1940.7 42.6 L1938.7 55.1 M1938.7 55.1 Q1944 49.5 1951.4 48.8 M1951.4 48.8 L1959 48.6 M1951.4 48.8 L1957.8 55.5 M1938.7 55.1 L1934.3 60.8 M1938.7 55.1 L1940 64.5" stroke="#9a9393" stroke-width="1.3" fill="none"/><circle cx="1940.7" cy="42.6" r="2.9" fill="#6a6363"/><circle cx="1951.4" cy="48.8" r="2.9" fill="#6a6363"/><circle cx="1938.7" cy="55.1" r="2.9" fill="#6a6363"/><g transform="translate(2080.5 50.5) rotate(45)"><circle cx="0" cy="-13.6" r="6.9" fill="#74a6f4"/><rect x="-3.1" y="-11" width="6.2" height="28.7" fill="#74a6f4"/><circle cx="0" cy="17.7" r="3.4" fill="#74a6f4"/><circle cx="0" cy="17.9" r="1.6" fill="#f9f2f2"/><path d="M-3.1 -15 A3.1 3.1 0 0 0 3.1 -15 L4.6 -22 H-4.6 Z" fill="#f9f2f2"/></g><g transform="translate(2080.5 50.5) rotate(-45) scale(0.93)"><path d="M-3.6 -23 H3.6 V-17.8 L1.8 -15.5 V2 H-1.8 V-15.5 L-3.6 -17.8 Z" fill="#0b6df0" stroke="#f9f2f2" stroke-width="2.4" paint-order="stroke"/><path d="M-4.3 2 H4.3 V5 H-4.3 Z" fill="#0b6df0" stroke="#f9f2f2" stroke-width="2.4" paint-order="stroke"/><path d="M-4.3 2 H4.3 V5 H-4.3 Z" fill="#0b6df0"/><rect x="-3.6" y="4.5" width="7.2" height="18.3" rx="3.6" fill="none" stroke="#0b6df0" stroke-width="2.3"/></g><rect x="2137.3" y="33.3" width="41.4" height="31.4" rx="5" stroke="#6a6363" stroke-width="2.6" fill="none"/><rect x="2140.5" y="53.5" width="35" height="8" fill="#6a6363"/><rect x="2207.8" y="33.3" width="41.4" height="31.4" rx="5" stroke="#1471ef" stroke-width="2.6" fill="none"/><rect x="2238.3" y="36.3" width="8" height="25.4" fill="#1471ef"/></svg>
<svg class="s" style="left:20px;top:110px;" width="1650" height="50" viewBox="20 110 1650 50"><path d="M36.2 120 H63.8 Q66.3 120 66.3 122.6 V124 L62.2 127.9 L58.6 124.3 H41.4 L37.8 127.9 L33.7 124 V122.6 Q33.7 120 36.2 120 Z" fill="#e8e4e3"/><rect x="38" y="132" width="8" height="4" fill="#e8e4e3"/><rect x="46" y="138" width="8" height="4" fill="#e8e4e3"/><rect x="54" y="144" width="8" height="4" fill="#e8e4e3"/><path d="M240 121.5 L252.5 134 L240 146.5" stroke="#c4bdbc" stroke-width="1.6" fill="none"/><ellipse cx="1390" cy="120.9" rx="14.9" ry="4.2" stroke="#e8e4e3" stroke-width="2.1" fill="none"/><path d="M1375.8 123 Q1386 129.5 1387.3 138 L1387.8 150 H1391.8 L1392.3 140 Q1393.5 131 1404.3 123 Q1398 125.4 1390 125.4 Q1381 125.4 1375.8 123 Z" fill="#e8e4e3"/><path d="M1392.8 138.2 Q1394.5 140.3 1398.5 140.2 Q1404.2 139.6 1404 134.2 Q1403.6 129.6 1398.8 128.6" stroke="#e8e4e3" stroke-width="2.1" fill="none"/><path d="M1466 117 H1451 V149 H1466" stroke="#e8e4e3" stroke-width="2.2" fill="none"/><rect x="1456" y="121.8" width="34" height="5.5" fill="#e8e4e3"/><rect x="1456" y="130" width="18" height="5.5" fill="#e8e4e3"/><rect x="1456" y="138.2" width="26" height="5.5" fill="#e8e4e3"/><g transform="translate(1548.55 135.8) rotate(45)"><rect x="-2.5" y="-25.3" width="5" height="17.5" rx="2.5" fill="#e8e4e3"/><path d="M-11.2 0 Q-11.4 -2.6 -7.5 -3.6 Q-2.8 -4.6 -2.5 -9.5 H2.5 Q2.8 -4.6 7.5 -3.6 Q11.4 -2.6 11.2 0 Z" fill="#e8e4e3"/><path d="M-11.2 2.0 H10.8 V11.5 Q10.8 13.6 8.7 13.6 H-9.1 Q-11.2 13.6 -11.2 11.5 Z" fill="#a29c9b"/><path d="M3.7 7.2 V14.5" stroke="#342727" stroke-width="1.6"/></g><g transform="translate(1638.3 125.7) rotate(45)"><circle cx="0" cy="0.3" r="10.2" fill="#e8e4e3"/><rect x="-4.5" y="3" width="9" height="25.7" fill="#e8e4e3"/><circle cx="0" cy="28.7" r="5.2" fill="#e8e4e3"/><circle cx="0" cy="28.7" r="2.6" fill="#342727"/><path d="M-4.6 -1.8 A4.6 4.6 0 0 0 4.6 -1.8 L6.8 -12 H-6.8 Z" fill="#342727"/></g></svg>
<div class="t" style="left:79.00px;top:121.00px;font-size:28.0px;line-height:28.0px;font-weight:400;color:#e9e5e4;">Strukturplan</div>
<div class="t" style="left:263.30px;top:122.00px;font-size:26.75px;line-height:26.75px;font-weight:400;color:#e9e5e4;">Eingabe</div>
<div class="t" style="left:1802.80px;top:121.00px;font-size:27.3px;line-height:27.3px;font-weight:400;color:#978e8e;">Neues Projekt:</div>
<div class="t" style="left:1986.50px;top:121.00px;font-size:27.25px;line-height:27.25px;font-weight:400;color:#ece8e7;">Allgemein</div>
<div class="r" style="left:18px;top:166px;width:1661px;height:1100px;background:#fafafa;border-radius:8px 8px 0 0;overflow:hidden">
<div class="r" style="left:0px;top:0px;width:1661px;height:80px;background:linear-gradient(#eeeeee,#dedede);"></div>
<div class="r" style="left:814.5px;top:40.5px;width:42.89999999999998px;height:39.5px;background:linear-gradient(#d8d8d8,#cfcfcf);"></div>
<div class="r" style="left:1139.5px;top:40.5px;width:113.0px;height:39.5px;background:linear-gradient(#d8d8d8,#cfcfcf);"></div>
<div class="r" style="left:1534.6px;top:40.5px;width:111.90000000000009px;height:39.5px;background:linear-gradient(#d8d8d8,#cfcfcf);"></div>
<div class="r" style="left:0px;top:81px;width:1631px;height:45px;background:#fbfbfb;"></div>
<div class="r" style="left:0px;top:127px;width:1631px;height:46px;background:#e3e3e3;"></div>
<div class="r" style="left:0px;top:174px;width:1631px;height:45px;background:#fbfbfb;"></div>
<div class="r" style="left:0px;top:219px;width:1631px;height:45px;background:#f1f1f1;"></div>
<div class="r" style="left:0px;top:264px;width:1631px;height:45px;background:#fbfbfb;"></div>
<div class="r" style="left:0px;top:309px;width:1631px;height:46px;background:#f1f1f1;"></div>
<div class="r" style="left:0px;top:355px;width:1631px;height:45px;background:#fbfbfb;"></div>
<div class="r" style="left:0px;top:400px;width:1631px;height:45px;background:#f1f1f1;"></div>
<div class="r" style="left:0px;top:445px;width:1631px;height:46px;background:#fbfbfb;"></div>
<div class="r" style="left:0px;top:491px;width:1631px;height:35px;background:#f1f1f1;"></div>
<div class="r" style="left:0px;top:526px;width:1631px;height:31px;background:#fbfbfb;"></div>
<div class="r" style="left:0px;top:557px;width:1631px;height:45px;background:#f1f1f1;"></div>
<div class="r" style="left:0px;top:602px;width:1631px;height:45px;background:#fbfbfb;"></div>
<div class="r" style="left:0px;top:647px;width:1631px;height:46px;background:#f1f1f1;"></div>
<div class="r" style="left:0px;top:693px;width:1631px;height:45px;background:#fbfbfb;"></div>
<div class="r" style="left:0px;top:738px;width:1631px;height:45px;background:#f1f1f1;"></div>
<div class="r" style="left:0px;top:783px;width:1631px;height:46px;background:#fbfbfb;"></div>
<div class="r" style="left:0px;top:829px;width:1631px;height:45px;background:#f1f1f1;"></div>
<div class="r" style="left:0px;top:874px;width:1631px;height:45px;background:#fbfbfb;"></div>
<div class="r" style="left:0px;top:919px;width:1631px;height:45px;background:#f1f1f1;"></div>
<div class="r" style="left:0px;top:964px;width:1631px;height:45px;background:#fbfbfb;"></div>
<div class="r" style="left:0px;top:1009px;width:1631px;height:45px;background:#f1f1f1;"></div>
<div class="r" style="left:815px;top:81px;width:42px;height:1053px;background:rgba(0,0,0,0.022);"></div>
<div class="r" style="left:1140px;top:81px;width:112px;height:1053px;background:rgba(0,0,0,0.022);"></div>
<div class="r" style="left:1535px;top:81px;width:96px;height:1053px;background:rgba(0,0,0,0.022);"></div>
<div class="r" style="left:1631px;top:81px;width:30px;height:1053px;background:linear-gradient(90deg,#e9e9e9,#eeeeee 40%,#f0f0f0);"></div>
<div class="r" style="left:81.5px;top:0px;width:1.0px;height:80px;background:#8f8f8f;"></div>
<div class="r" style="left:176.9px;top:0px;width:1.0px;height:80px;background:#8f8f8f;"></div>
<div class="r" style="left:469.9px;top:0px;width:1.0px;height:80px;background:#8f8f8f;"></div>
<div class="r" style="left:655.1px;top:0px;width:1.0px;height:80px;background:#8f8f8f;"></div>
<div class="r" style="left:814.0px;top:0px;width:1.0px;height:80px;background:#8f8f8f;"></div>
<div class="r" style="left:856.9px;top:0px;width:1.0px;height:80px;background:#8f8f8f;"></div>
<div class="r" style="left:1252.0px;top:0px;width:1.0px;height:80px;background:#8f8f8f;"></div>
<div class="r" style="left:1646.0px;top:0px;width:1.0px;height:80px;background:#8f8f8f;"></div>
<div class="r" style="left:814.5px;top:40px;width:846.5px;height:1px;background:#8f8f8f;"></div>
<div class="r" style="left:914.1px;top:41px;width:1.0px;height:39px;background:#8f8f8f;"></div>
<div class="r" style="left:969.9px;top:41px;width:1.0px;height:39px;background:#8f8f8f;"></div>
<div class="r" style="left:1026.0px;top:41px;width:1.0px;height:39px;background:#8f8f8f;"></div>
<div class="r" style="left:1082.8px;top:41px;width:1.0px;height:39px;background:#8f8f8f;"></div>
<div class="r" style="left:1139.0px;top:41px;width:1.0px;height:39px;background:#8f8f8f;"></div>
<div class="r" style="left:1195.0px;top:41px;width:1.0px;height:39px;background:#8f8f8f;"></div>
<div class="r" style="left:1307.9px;top:41px;width:1.0px;height:39px;background:#8f8f8f;"></div>
<div class="r" style="left:1363.9px;top:41px;width:1.0px;height:39px;background:#8f8f8f;"></div>
<div class="r" style="left:1421.1px;top:41px;width:1.0px;height:39px;background:#8f8f8f;"></div>
<div class="r" style="left:1477.1px;top:41px;width:1.0px;height:39px;background:#8f8f8f;"></div>
<div class="r" style="left:1534.1px;top:41px;width:1.0px;height:39px;background:#8f8f8f;"></div>
<div class="r" style="left:1590.0px;top:41px;width:1.0px;height:39px;background:#8f8f8f;"></div>
<div class="r" style="left:0px;top:80px;width:1661px;height:1px;background:#878787;"></div>
<div class="r" style="left:814.0px;top:81px;width:1.0px;height:1053px;background:#8f8f8f;"></div>
<div class="r" style="left:856.9px;top:81px;width:1.0px;height:1053px;background:#8f8f8f;"></div>
<div class="r" style="left:1252.0px;top:81px;width:1.0px;height:1053px;background:#8f8f8f;"></div>
<div class="r" style="left:1630px;top:81px;width:1.5px;height:1053px;background:#c6c6c6;"></div>
<div class="r" style="left:0px;top:126px;width:1631px;height:1px;background:#8c8c8c;"></div>
<div class="r" style="left:0px;top:173px;width:1631px;height:1px;background:#8c8c8c;"></div>
</div>
<div class="t" style="left:-2932.40px;width:3000px;text-align:right;top:174.00px;font-size:26.0px;line-height:26.0px;font-weight:400;color:#000;">#</div>
<div class="t" style="left:107.10px;top:174.00px;font-size:26.0px;line-height:26.0px;font-weight:400;color:#000;">Info</div>
<div class="t" style="left:201.20px;top:174.00px;font-size:26.0px;line-height:26.0px;font-weight:400;color:#000;">Titel</div>
<div class="t" style="left:-2334.00px;width:3000px;text-align:right;top:174.00px;font-size:26.0px;line-height:26.0px;font-weight:400;color:#000;">Vorgabe</div>
<div class="t" style="left:-2334.00px;width:3000px;text-align:right;top:204.00px;font-size:26.0px;line-height:26.0px;font-weight:400;color:#000;">Arbeit</div>
<div class="r" style="left:675px;top:170px;width:157px;height:70px;overflow:hidden"><div class="t" style="left:4.50px;top:4.00px;font-size:26.0px;line-height:26.0px;font-weight:400;color:#000;">Vorgabe</div><div class="t" style="left:4.50px;top:34.00px;font-size:26.0px;line-height:26.0px;font-weight:400;color:#000;letter-spacing:0.4px;">frühester Sta</div></div>
<div class="r" style="left:834px;top:170px;width:41px;height:35px;overflow:hidden"><div class="t" style="left:3.90px;top:4.00px;font-size:26.0px;line-height:26.0px;font-weight:400;color:#000;">KW 17</div></div>
<div class="t" style="left:-427.10px;width:3000px;text-align:center;top:174.00px;font-size:26.0px;line-height:26.0px;font-weight:400;color:#000;">KW 18, 1. Mai</div>
<div class="t" style="left:-32.50px;width:3000px;text-align:center;top:174.00px;font-size:26.0px;line-height:26.0px;font-weight:400;color:#000;">KW 19, 8. Mai</div>
<div class="r" style="left:1666px;top:170px;width:12px;height:35px;overflow:hidden"><div class="t" style="left:5.30px;top:4.00px;font-size:26.0px;line-height:26.0px;font-weight:400;color:#000;">KW 20</div></div>
<div class="t" style="left:-646.50px;width:3000px;text-align:center;top:214.00px;font-size:26.0px;line-height:26.0px;font-weight:400;color:#000;">30</div>
<div class="t" style="left:-596.00px;width:3000px;text-align:center;top:214.00px;font-size:26.0px;line-height:26.0px;font-weight:400;color:#000;">1</div>
<div class="t" style="left:-539.50px;width:3000px;text-align:center;top:214.00px;font-size:26.0px;line-height:26.0px;font-weight:400;color:#000;">2</div>
<div class="t" style="left:-483.55px;width:3000px;text-align:center;top:214.00px;font-size:26.0px;line-height:26.0px;font-weight:400;color:#000;">3</div>
<div class="t" style="left:-427.10px;width:3000px;text-align:center;top:214.00px;font-size:26.0px;line-height:26.0px;font-weight:400;color:#000;">4</div>
<div class="t" style="left:-370.60px;width:3000px;text-align:center;top:214.00px;font-size:26.0px;line-height:26.0px;font-weight:400;color:#000;">5</div>
<div class="t" style="left:-314.50px;width:3000px;text-align:center;top:214.00px;font-size:26.0px;line-height:26.0px;font-weight:400;color:#000;">6</div>
<div class="t" style="left:-258.00px;width:3000px;text-align:center;top:214.00px;font-size:26.0px;line-height:26.0px;font-weight:400;color:#000;">7</div>
<div class="t" style="left:-201.55px;width:3000px;text-align:center;top:214.00px;font-size:26.0px;line-height:26.0px;font-weight:400;color:#000;">8</div>
<div class="t" style="left:-145.60px;width:3000px;text-align:center;top:214.00px;font-size:26.0px;line-height:26.0px;font-weight:400;color:#000;">9</div>
<div class="t" style="left:-89.00px;width:3000px;text-align:center;top:214.00px;font-size:26.0px;line-height:26.0px;font-weight:400;color:#000;">10</div>
<div class="t" style="left:-32.40px;width:3000px;text-align:center;top:214.00px;font-size:26.0px;line-height:26.0px;font-weight:400;color:#000;">11</div>
<div class="t" style="left:24.10px;width:3000px;text-align:center;top:214.00px;font-size:26.0px;line-height:26.0px;font-weight:400;color:#000;">12</div>
<div class="t" style="left:80.55px;width:3000px;text-align:center;top:214.00px;font-size:26.0px;line-height:26.0px;font-weight:400;color:#000;">13</div>
<div class="t" style="left:136.50px;width:3000px;text-align:center;top:214.00px;font-size:26.0px;line-height:26.0px;font-weight:400;color:#000;">14</div>
<div class="r" style="left:1665px;top:208px;width:13px;height:37px;overflow:hidden"><div class="t" style="left:-1477.00px;width:3000px;text-align:center;top:6.00px;font-size:26.0px;line-height:26.0px;font-weight:400;color:#000;">15</div></div>
<svg class="s" style="left:60px;top:190px;" width="180" height="100" viewBox="60 190 180 100"><path d="M72.7 215 L82.6 199.7 L92.5 215 Z" fill="#000"/><path d="M203 261.7 H224 L213.5 278.6 Z" fill="#000"/><path d="M108 260.4 Q108 258.1 110.3 258.1 H117.3 Q118.7 258.1 119.4 259.3 L120.1 260.5 H129.3 Q131.2 260.5 131.2 262.2 V263.4 H108 Z" fill="#000"/><path d="M108 265.3 H131.2 V280 Q131.2 281 130.2 281 H109 Q108 281 108 280 Z" fill="#000"/><circle cx="147.2" cy="269.3" r="10.2" stroke="#000" stroke-width="2.1" fill="none"/><path d="M144.6 266.8 L147.3 269.7 L152 264.4" stroke="#000" stroke-width="2.3" fill="none" stroke-linecap="round" stroke-linejoin="round"/></svg>
<div class="t" style="left:-2907.00px;width:3000px;text-align:right;top:257.00px;font-size:26px;line-height:26px;font-weight:700;color:#000;">0</div>
<div class="t" style="left:236.30px;top:257.00px;font-size:26.4px;line-height:26.4px;font-weight:700;color:#000;">Neues Projekt</div>
<div class="t" style="left:679.50px;top:257.00px;font-size:26.55px;line-height:26.55px;font-weight:700;color:#000;">5. Mai 2023</div>
<div class="t" style="left:-2907.50px;width:3000px;text-align:right;top:303.00px;font-size:26.0px;line-height:26.0px;font-weight:400;color:#000;">1</div>
<div class="t" style="left:261.60px;top:304.00px;font-size:25.95px;line-height:25.95px;font-weight:400;color:#000;">Neuer Vorgang</div>
<div class="t" style="left:-2334.00px;width:3000px;text-align:right;top:304.00px;font-size:25.95px;line-height:25.95px;font-weight:400;color:#000;">2 Tage</div>
<div class="t" style="left:879.30px;top:259.00px;font-size:22.15px;line-height:22.15px;font-weight:400;color:#000;">Neues Projekt</div>
<div class="t" style="left:881.30px;top:307.00px;font-size:22.15px;line-height:22.15px;font-weight:400;color:#000;">Neuer Vorgang</div>
<svg class="s" style="left:1020px;top:245px;" width="330" height="100" viewBox="1020 245 330 100"><g transform="translate(0 0.6)"><defs><clipPath id="sb"><path d="M1041 256 H1331 Q1337.9 256 1337.9 263 V268 L1326.4 280 L1316 270 H1056 L1045.2 280 L1033.7 268 V263 Q1033.7 256 1041 256 Z"/></clipPath></defs><path d="M1041 256 H1331 Q1337.9 256 1337.9 263 V268 L1326.4 280 L1316 270 H1056 L1045.2 280 L1033.7 268 V263 Q1033.7 256 1041 256 Z" fill="#d0e0f8" stroke="#2274d6" stroke-width="1.3"/><rect x="1030" y="250" width="71" height="40" fill="#0b91fa" clip-path="url(#sb)"/><rect x="1044.4" y="300.5" width="282" height="31" rx="8" fill="#d0e0f8" stroke="#2274d6" stroke-width="1.2"/><path d="M1052.4 300.5 H1101 V331.5 H1052.4 Q1044.4 331.5 1044.4 323.5 V308.5 Q1044.4 300.5 1052.4 300.5 Z" fill="#0b91fa"/></g></svg>
<svg class="s" style="left:1690px;top:160px;" width="590" height="1007" viewBox="1690 160 590 1007"><rect x="1704" y="166" width="560" height="78" rx="9" fill="#6b6160"/><path d="M1816 166.6 H2255" stroke="#7d7473" stroke-width="1.2"/><defs><linearGradient id="bg1" x1="0" y1="0" x2="0" y2="1"><stop offset="0" stop-color="#1b6be7"/><stop offset="1" stop-color="#1760d7"/></linearGradient></defs><path d="M1713 166 H1816 V244 H1713 Q1704 244 1704 235 V175 Q1704 166 1713 166 Z" fill="url(#bg1)"/><rect x="1742" y="187" width="36.1" height="36.1" rx="1.8" fill="#fff"/><path d="M1750.1 191.8 V218.5" stroke="#1a62dd" stroke-width="3.4" stroke-linecap="round"/><ellipse cx="1750.1" cy="199.1" rx="5.6" ry="4" fill="#1a62dd"/><ellipse cx="1750.1" cy="199.1" rx="3.6" ry="1.7" fill="#a9c3ef"/><path d="M1760 191.8 V218.5" stroke="#1a62dd" stroke-width="3.4" stroke-linecap="round"/><ellipse cx="1760" cy="211" rx="5.6" ry="4" fill="#1a62dd"/><ellipse cx="1760" cy="211" rx="3.6" ry="1.7" fill="#a9c3ef"/><path d="M1770 191.8 V218.5" stroke="#1a62dd" stroke-width="3.4" stroke-linecap="round"/><ellipse cx="1770" cy="203" rx="5.6" ry="4" fill="#1a62dd"/><ellipse cx="1770" cy="203" rx="3.6" ry="1.7" fill="#a9c3ef"/><path d="M1857 186.9 H1888.8 Q1891 186.9 1891 189.1 V194.9 H1854.7 V189.1 Q1854.7 186.9 1857 186.9 Z" fill="#b3aead"/><path d="M1854.7 197.2 H1891 V221 Q1891 223.2 1888.8 223.2 H1856.9 Q1854.7 223.2 1854.7 221 Z" fill="#e6e2e1"/><rect x="1862.4" y="184" width="3" height="6.5" rx="0.8" fill="#f4f2f2" stroke="#6b605f" stroke-width="1.2"/><rect x="1880.4" y="184" width="3" height="6.5" rx="0.8" fill="#f4f2f2" stroke="#6b605f" stroke-width="1.2"/><rect x="1869" y="199.1" width="7.8" height="5.6" fill="#6b605f"/><rect x="1879.2" y="199.1" width="7.8" height="5.6" fill="#6b605f"/><rect x="1859.1" y="207.1" width="7.8" height="5.6" fill="#6b605f"/><rect x="1869" y="207.1" width="7.8" height="5.6" fill="#6b605f"/><rect x="1879.2" y="207.1" width="7.8" height="5.6" fill="#6b605f"/><rect x="1859.1" y="215.2" width="7.8" height="5.6" fill="#6b605f"/><rect x="1869" y="215.2" width="7.8" height="5.6" fill="#6b605f"/><path d="M1968 187 V195 M1968 201 V209 M1972 201 V209 M1968 215 V223.1 M1972 215 V223.1 M1976 215 V223.1" stroke="#f0eded" stroke-width="2.1"/><path d="M1977 190.9 H2001 M1981.2 205 H2001 M1985.1 219 H2001" stroke="#bab5b4" stroke-width="4.2" stroke-linecap="round"/><path d="M2081.1 190.9 H2097.9 M2081.1 205 H2097.9 M2081.1 219 H2097.9" stroke="#bab5b4" stroke-width="4.2" stroke-linecap="round"/><path d="M2111 187.2 L2116.1 195 H2105.9 Z" fill="#e6e2e1"/><rect x="2106.8" y="201" width="8.3" height="8" fill="#e6e2e1"/><circle cx="2111" cy="219" r="5.2" fill="#e6e2e1"/><path d="M2216 186.8 H2228.2 V198.6 L2222.1 195.3 L2216 198.6 Z" fill="#b0abaa"/><path d="M2207 192.6 Q2212.2 192.6 2212.2 197 V214.5 Q2214 215.2 2218 216.5 Q2224.1 218.5 2224.1 222.9 H2192 Q2192 218.5 2198 216.5 Q2202 215.3 2203.8 213.5 Q2201.8 209 2201.8 203 V197 Q2201.8 192.6 2207 192.6 Z" fill="#e6e2e1"/><path d="M2222.10 197.30 L2223.98 202.31 L2229.33 202.55 L2225.14 205.89 L2226.57 211.05 L2222.10 208.10 L2217.63 211.05 L2219.06 205.89 L2214.87 202.55 L2220.22 202.31 Z" fill="#e6e2e1" stroke="#6b605f" stroke-width="2.2" paint-order="stroke"/><path d="M1707 282.5 H1728.3 L1717.6 299 Z" fill="#ebe7e6"/><path d="M1708.3 557 L1724.8 567.3 L1708.3 577.6 Z" fill="#ebe7e6"/><path d="M1708.3 641 L1724.8 651.3 L1708.3 661.6 Z" fill="#ebe7e6"/><path d="M1708.3 737.5 L1724.8 747.8 L1708.3 758.1 Z" fill="#ebe7e6"/><path d="M1708.3 885.5 L1724.8 895.8 L1708.3 906.1 Z" fill="#ebe7e6"/><rect x="1707" y="523.45" width="555" height="1.5" fill="url(#sepg)"/><rect x="1707" y="606.95" width="555" height="1.5" fill="url(#sepg)"/><rect x="1707" y="703.75" width="555" height="1.5" fill="url(#sepg)"/><rect x="1707" y="852.75" width="555" height="1.5" fill="url(#sepg)"/><rect x="1707" y="936.35" width="555" height="1.5" fill="url(#sepg)"/><defs><linearGradient id="sepg" x1="0" y1="0" x2="1" y2="0"><stop offset="0" stop-color="#3c3030"/><stop offset="0.08" stop-color="#524747"/><stop offset="0.92" stop-color="#524747"/><stop offset="1" stop-color="#3c3030"/></linearGradient></defs><defs><linearGradient id="bg2" x1="0" y1="0" x2="0" y2="1"><stop offset="0" stop-color="#2a7ff0"/><stop offset="1" stop-color="#1663d6"/></linearGradient></defs><rect x="1975" y="336.3" width="287" height="39.69999999999999" rx="9" fill="#6a5f5e"/><path d="M1984 336.90000000000003 H2253" stroke="#7c7170" stroke-width="1.2"/><rect x="2226" y="340" width="32" height="32" rx="7" fill="url(#bg2)"/><path d="M2236 352.0 L2242 346.0 L2248 352.0 M2236 360.0 L2242 366.0 L2248 360.0" stroke="#fff" stroke-width="2.6" fill="none" stroke-linecap="round" stroke-linejoin="round"/><rect x="1975.5" y="401.1" width="286" height="37.799999999999955" rx="9" fill="#3c3030" stroke="#594e4d" stroke-width="1"/><rect x="2226" y="404" width="32" height="32" rx="7" fill="url(#bg2)"/><path d="M2236 417.5 L2242 423.5 L2248 417.5" stroke="#fff" stroke-width="2.6" fill="none" stroke-linecap="round" stroke-linejoin="round"/><rect x="1975" y="464" width="287" height="39.60000000000002" rx="9" fill="#6a5f5e"/><path d="M1984 464.6 H2253" stroke="#7c7170" stroke-width="1.2"/><rect x="2226" y="467.8" width="32" height="32.0" rx="7" fill="url(#bg2)"/><path d="M2236 479.8 L2242 473.8 L2248 479.8 M2236 487.8 L2242 493.8 L2248 487.8" stroke="#fff" stroke-width="2.6" fill="none" stroke-linecap="round" stroke-linejoin="round"/><rect x="1975.5" y="729.7" width="286" height="38.59999999999991" rx="9" fill="#3c3030" stroke="#594e4d" stroke-width="1"/><rect x="2226" y="733" width="32" height="32" rx="7" fill="url(#bg2)"/><path d="M2236 746.5 L2242 752.5 L2248 746.5" stroke="#fff" stroke-width="2.6" fill="none" stroke-linecap="round" stroke-linejoin="round"/><rect x="1982" y="733" width="26" height="32" rx="5" fill="#3f5f8c"/><rect x="1975" y="793.3" width="287" height="39.40000000000009" rx="9" fill="#6a5f5e"/><path d="M1984 793.9 H2253" stroke="#7c7170" stroke-width="1.2"/><rect x="2226" y="797" width="32" height="32" rx="7" fill="url(#bg2)"/><path d="M2236 809.0 L2242 803.0 L2248 809.0 M2236 817.0 L2242 823.0 L2248 817.0" stroke="#fff" stroke-width="2.6" fill="none" stroke-linecap="round" stroke-linejoin="round"/><rect x="1977.5" y="961.5" width="172" height="37" rx="0" fill="#3c3030" stroke="#594e4d" stroke-width="1"/><rect x="2162" y="961" width="100" height="40" rx="9" fill="#6a5f5e"/><path d="M2171 961.6 H2253" stroke="#7c7170" stroke-width="1.2"/><rect x="2226" y="965" width="32" height="32" rx="7" fill="url(#bg2)"/><path d="M2236 977.0 L2242 971.0 L2248 977.0 M2236 985.0 L2242 991.0 L2248 985.0" stroke="#fff" stroke-width="2.6" fill="none" stroke-linecap="round" stroke-linejoin="round"/><rect x="1975" y="1025.5" width="287" height="39.5" rx="9" fill="#6a5f5e"/><path d="M1984 1026.1 H2253" stroke="#7c7170" stroke-width="1.2"/><rect x="2226" y="1029.3" width="32" height="32.0" rx="7" fill="url(#bg2)"/><path d="M2236 1041.3 L2242 1035.3 L2248 1041.3 M2236 1049.3 L2242 1055.3 L2248 1049.3" stroke="#fff" stroke-width="2.6" fill="none" stroke-linecap="round" stroke-linejoin="round"/></svg>
<div class="t" style="left:1741.50px;top:277.00px;font-size:27.1px;line-height:27.1px;font-weight:700;color:#ebe7e6;">Datumsvorgaben</div>
<div class="t" style="left:1741.30px;top:341.00px;font-size:27.6px;line-height:27.6px;font-weight:400;color:#ebe7e6;">Richtung</div>
<div class="t" style="left:1985.60px;top:341.00px;font-size:27.65px;line-height:27.65px;font-weight:400;color:#ebe7e6;">Vorwärts</div>
<div class="t" style="left:1740.80px;top:406.00px;font-size:27.3px;line-height:27.3px;font-weight:400;color:#ebe7e6;">Start</div>
<div class="t" style="left:1982.30px;top:406.00px;font-size:27.55px;line-height:27.55px;font-weight:400;color:#ebe7e6;">5. Mai 2023</div>
<div class="t" style="left:1740.80px;top:469.00px;font-size:27.4px;line-height:27.4px;font-weight:400;color:#ebe7e6;">Erster Wochentag</div>
<div class="t" style="left:1985.60px;top:469.00px;font-size:28.0px;line-height:28.0px;font-weight:400;color:#ebe7e6;">Montag</div>
<div class="t" style="left:1740.80px;top:554.00px;font-size:27.1px;line-height:27.1px;font-weight:700;color:#ebe7e6;">Arbeit &amp; Dauer</div>
<div class="t" style="left:1740.80px;top:638.00px;font-size:27.85px;line-height:27.85px;font-weight:700;color:#ebe7e6;">Standardwerte</div>
<div class="t" style="left:1740.80px;top:734.00px;font-size:27.9px;line-height:27.9px;font-weight:700;color:#ebe7e6;">Statusdatum</div>
<div class="t" style="left:1980.30px;top:735.00px;font-size:27.05px;line-height:27.05px;font-weight:400;color:#8f8787;">11.05.23, 1:30 PM</div>
<div class="t" style="left:1740.80px;top:798.00px;font-size:27.25px;line-height:27.25px;font-weight:400;color:#ebe7e6;">Wirkl. Start/Ende</div>
<div class="t" style="left:1986.10px;top:798.00px;font-size:27.55px;line-height:27.55px;font-weight:400;color:#ebe7e6;">Automatisch</div>
<div class="t" style="left:1740.80px;top:884.00px;font-size:26.6px;line-height:26.6px;font-weight:700;color:#ebe7e6;">Ressourcen</div>
<div class="t" style="left:1740.80px;top:966.00px;font-size:27.1px;line-height:27.1px;font-weight:400;color:#ebe7e6;">Währungssymbol</div>
<div class="t" style="left:1981.90px;top:966.00px;font-size:27.3px;line-height:27.3px;font-weight:400;color:#ebe7e6;">€</div>
<div class="t" style="left:2172.10px;top:966.00px;font-size:27.3px;line-height:27.3px;font-weight:400;color:#ebe7e6;">1 €</div>
<div class="t" style="left:1740.80px;top:1030.00px;font-size:27.25px;line-height:27.25px;font-weight:400;color:#ebe7e6;">Anmeldedialog</div>
<div class="t" style="left:1986.30px;top:1030.00px;font-size:27.75px;line-height:27.75px;font-weight:400;color:#ebe7e6;">Benutzerliste</div>
</div></div>
<div class="r" style="left:0;top:0;width:3037px;height:1167px;pointer-events:none;will-change:transform"><div class="r" style="left:2301px;top:784px;width:721px;height:175px;border-radius:12px;box-shadow:0 6px 20px rgba(0,0,0,0.22)"></div><svg class="s" style="left:2290px;top:780px;" width="740" height="190" viewBox="2290 780 740 190"><g transform="translate(-0.8 -0.7)"><defs><linearGradient id="pmg" x1="0" y1="0" x2="1" y2="0"><stop offset="0" stop-color="#6a605f"/><stop offset="0.3" stop-color="#463b3b"/><stop offset="1" stop-color="#3b2f2f"/></linearGradient><linearGradient id="hl" x1="0" y1="0" x2="1" y2="0"><stop offset="0" stop-color="#4d88ea"/><stop offset="0.3" stop-color="#1f5fd0"/><stop offset="1" stop-color="#1b5bcb"/></linearGradient></defs><rect x="2302.5" y="785.5" width="720.5" height="174.3" rx="12" fill="url(#pmg)" stroke="#141010" stroke-width="1.2"/><rect x="2303.8" y="786.8" width="717.9" height="171.8" rx="11" fill="none" stroke="#7a706f" stroke-width="1" opacity="0.8"/><rect x="2312.3" y="795.5" width="700.8" height="43.2" rx="8" fill="url(#hl)"/><path d="M2330.5 818 L2337.5 825.5 L2348.5 809.5" stroke="#fff" stroke-width="3" fill="none" stroke-linecap="round" stroke-linejoin="round"/><rect x="2330" y="849.3" width="664" height="1.3" fill="#6e6463"/><path d="M2943.2 805 V835 L2950.2 828.4 L2954.6 838.6 L2958.8 836.8 L2954.6 827 H2963.6 Z" fill="#000" stroke="#fff" stroke-width="1.6" stroke-linejoin="round"/></g></svg><div class="t" style="left:2368.50px;top:805.00px;font-size:27.6px;line-height:27.6px;font-weight:400;color:#ffffff;">Automatisch</div><div class="t" style="left:2368.50px;top:870.00px;font-size:27.22px;line-height:27.22px;font-weight:400;color:#efebea;">Aus erwarteten Werten beim Ändern der Erledigung</div><div class="t" style="left:2368.50px;top:914.00px;font-size:27.15px;line-height:27.15px;font-weight:400;color:#efebea;">Aus Statusdatum beim Ändern der Erledigung</div></div>
</body></html>
